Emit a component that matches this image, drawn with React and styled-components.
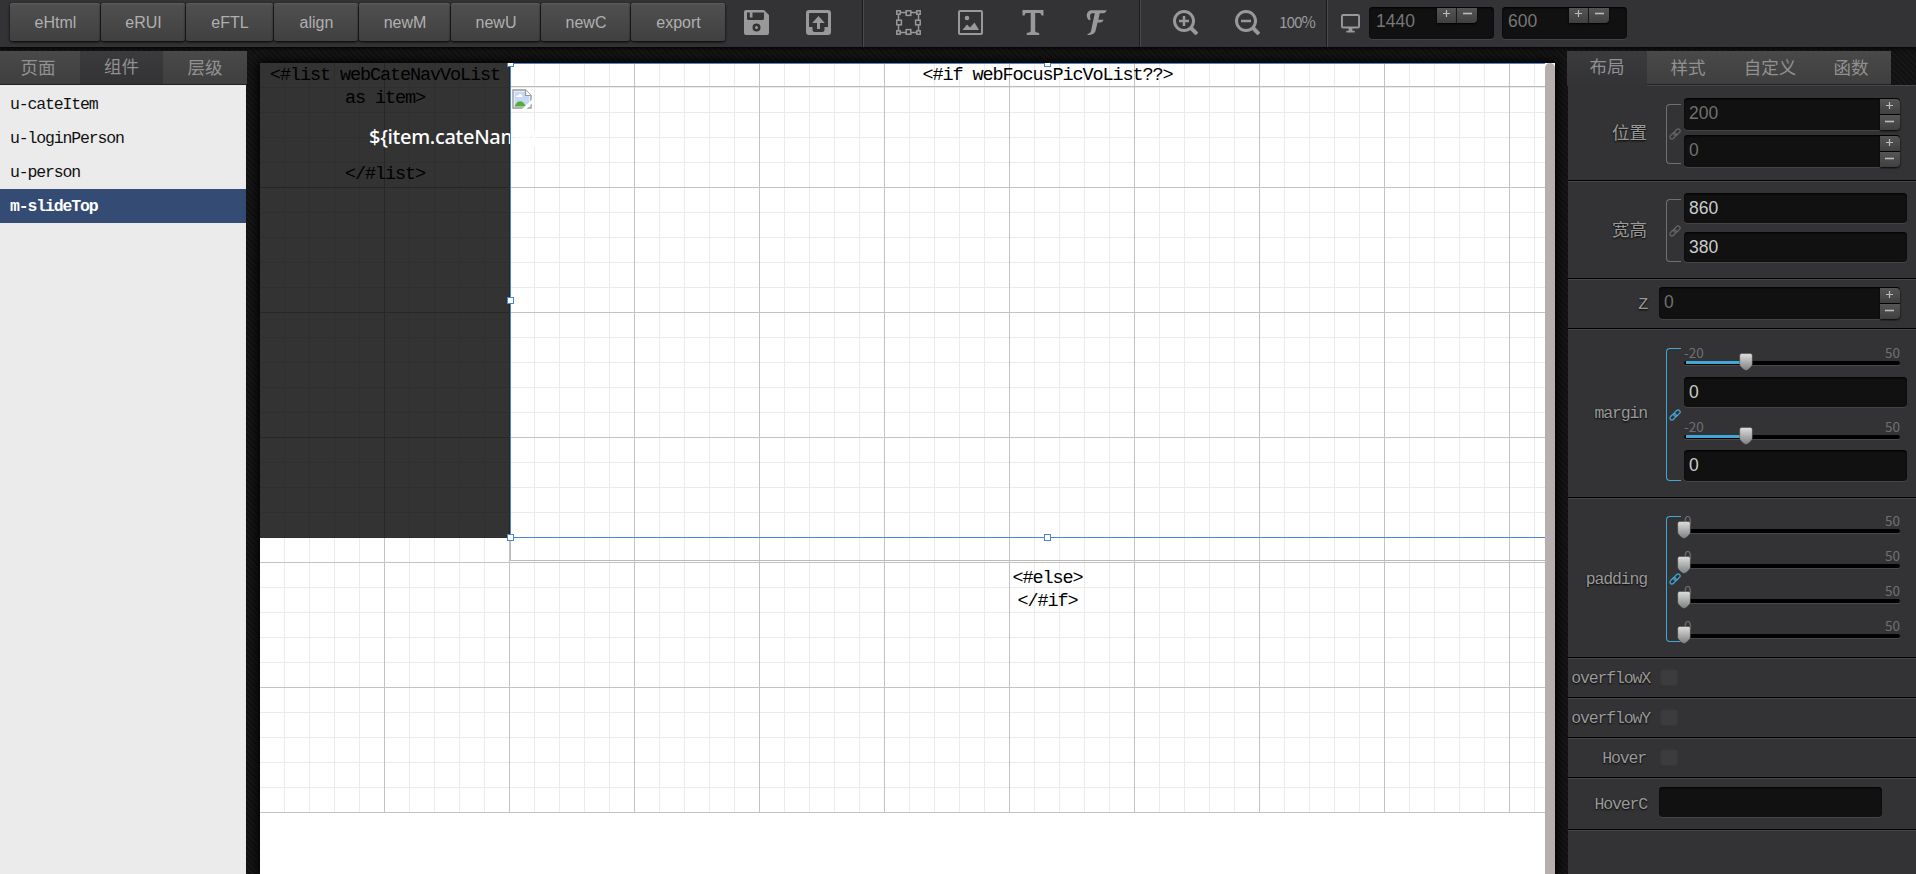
import React from 'react';
import styled, { createGlobalStyle, css } from 'styled-components';

const Global = createGlobalStyle`
  * { box-sizing: border-box; }
  html, body, #root { height: 100%; margin: 0; }
  body { overflow: hidden; background: #141414; font-family: "Liberation Sans", "Noto Sans CJK SC", sans-serif; }
`;

const mono = css`
  font-family: "Liberation Mono", "Noto Sans CJK SC", monospace;
`;
const gothic = css`
  ${mono}
  font-size: 16.5px;
  letter-spacing: -1.15px;
`;

const Page = styled.div`
  display: flex;
  flex-direction: column;
  height: 874px;
  width: 1916px;
  overflow: hidden;
  background: repeating-linear-gradient(45deg, #111 0 2px, #171717 2px 4px);
`;

const Toolbar = styled.header`
  display: flex;
  flex: none;
  height: 47px;
  background: #333335;
  box-shadow: 0 1px 4px #000;
`;
const Buttons = styled.div`
  display: flex;
  gap: 1px;
  padding: 3px 0 6px 10px;
  width: 725px;
`;
const ToolButton = styled.button`
  width: ${p => p.$w}px;
  height: 38px;
  padding: 2px 0 0 1px;
  border: 0;
  border-radius: 3px;
  background: linear-gradient(#505050, #404040);
  box-shadow: 0 1px 3px #000, inset 0 1px 0 #5c5c5c;
  color: #b0b0b0;
  font: 16px "Liberation Sans", sans-serif;
`;
const Group = styled.div`
  display: flex;
  align-items: center;
  height: 47px;
  width: ${p => p.$w}px;
  padding: 0 0 2px ${p => p.$pl}px;
  gap: ${p => p.$gap || 0}px;
  border-right: ${p => (p.$last ? 0 : '1px solid #1c1c1c')};
  box-shadow: ${p => (p.$last ? 'none' : '1px 0 0 #4a4a4a')};
`;
const ToolIcon = styled.svg`
  flex: none;
  width: 25px;
  height: 25px;
  fill: #999;
`;
const OutlineIcon = styled(ToolIcon)`
  fill: none;
  stroke: #999;
`;
const SmallIcon = styled(ToolIcon)`
  width: 19px;
  height: 19px;
  margin: 2px 9px 0 -1px;
`;
const Percent = styled.span`
  margin: 0 0 4px -18px;
  color: #999;
  font: 15.5px/20px "Noto Sans CJK SC", sans-serif;
  letter-spacing: -1.1px;
`;
const field = css`
  background: #111;
  border-radius: 4px;
  box-shadow: inset 0 1px 2px #000, 0 1px 0 #454545;
`;
const SizeField = styled.div`
  ${field}
  display: flex;
  width: 125px;
  height: 32px;
  margin-top: 1px;
  padding: 1px 0 0 7px;
  color: #777;
  font-size: 17.5px;
  line-height: 27px;
  & + & { margin-left: 8px; padding-left: 6px; }
`;
const SizeValue = styled.span`width: 61px;`;
const spin = css`
  display: flex;
  justify-content: center;
  align-items: center;
  background: linear-gradient(#555, #404040);
  svg { width: 9px; height: 9px; stroke: #bbb; stroke-width: 1.2; fill: none; }
`;
const FlatSpin = styled.div`
  ${spin}
  width: 20px;
  height: 15px;
  padding-bottom: 4px;
  border-right: ${p => (p.$line ? '1px solid #222' : 0)};
  border-bottom-right-radius: ${p => (p.$line ? 0 : 4)}px;
  box-shadow: 0 1px 2px #000;
`;

const Body = styled.main`
  display: flex;
  flex: 1;
  min-height: 0;
`;
const Side = styled.aside`
  width: 247px;
  padding-top: 4px;
  display: flex;
  flex-direction: column;
`;
const Tabs = styled.nav`
  display: flex;
  flex: none;
  height: 34px;
  color: #919191;
  font: 17.5px "Noto Sans CJK SC", sans-serif;
`;
const Tab = styled.div`
  width: ${p => p.$w}px;
  height: ${p => (p.$open ? 35 : 34)}px;
  padding-right: ${p => p.$pr || 0}px;
  line-height: ${p => (p.$active ? 30 : 31)}px;
  text-align: center;
  background: ${p => (p.$active ? 'linear-gradient(#3b3b3d, #333335)' : 'linear-gradient(#494949, #3f3f3f)')};
  border-bottom: ${p => (p.$open ? 0 : '1px solid #222')};
`;
const List = styled.div`
  flex: 1;
  width: 246px;
  padding-top: 2px;
  background: #ebebeb;
`;
const Item = styled.div`
  ${gothic}
  height: 34px;
  padding-left: 10px;
  line-height: 36px;
  background: ${p => (p.$on ? '#344b73' : 'none')};
  color: ${p => (p.$on ? '#fff' : '#111')};
  font-weight: ${p => (p.$on ? 700 : 400)};
`;

const Stage = styled.section`
  display: flex;
  width: 1295px;
  margin: 16px 12px 0 13px;
  box-shadow: 0 0 10px 2px #000;
`;
const Board = styled.div`
  position: relative;
  width: 1285px;
  overflow: hidden;
  background: #fff;
`;
const Grid = styled.div`
  display: flex;
  align-items: flex-start;
  height: 750px;
  background:
    linear-gradient(90deg, transparent 124px, #c3c3c3 124px) 0 0 / 125px 125px,
    linear-gradient(transparent 124px, #c3c3c3 124px) 0 0 / 125px 125px,
    linear-gradient(90deg, transparent 24px, #ebebeb 24px) 0 0 / 25px 25px,
    linear-gradient(transparent 24px, #ebebeb 24px) 0 0 / 25px 25px;
`;
const code = css`
  ${mono}
  padding-top: 1px;
  font-size: 18.5px;
  letter-spacing: -1.1px;
  line-height: 23px;
  text-align: center;
  color: #000;
`;
const CateBlock = styled.div`
  ${code}
  flex: none;
  width: 250px;
  height: 475px;
  background: rgba(0, 0, 0, 0.8);
`;
const CateName = styled.div`
  height: 53px;
  padding: 2px 0 0 109px;
  text-align: left;
  white-space: nowrap;
  font: 500 20px/50px "Noto Sans", sans-serif;
  letter-spacing: -0.3px;
  color: #fff;
`;
const Focus = styled.div`
  ${code}
  flex: none;
  width: 1075px;
`;
const Picture = styled.div`
  height: 475px;
  margin: -1px 0 6px;
  padding: 2px 0 0 1px;
  border: 1px solid #bbb;
  text-align: left;
  line-height: 0;
`;
const Selection = styled.div`
  position: absolute;
  left: 250px;
  top: 0;
  width: 1075px;
  height: 475px;
  border: 1px solid #4a86cf;
`;
const Handle = styled.i`
  position: absolute;
  left: ${p => p.$x};
  top: ${p => p.$y};
  width: 7px;
  height: 7px;
  margin: -4px 0 0 -4px;
  background: #fff;
  border: 1px solid #4a86cf;
`;
const Scroll = styled.div`
  width: 10px;
  background: #fff;
  &::before { content: ''; display: block; height: 100%; background: #b7aeae; border-radius: 5px 5px 0 0; }
`;

const Panel = styled.aside`
  width: 349px;
  padding-top: 4px;
`;
const Props = styled.div`
  margin-left: 1px;
  height: 789px;
  background: #333335;
  border-top: 1px solid #474747;
`;
const Row = styled.div`
  display: flex;
  height: ${p => p.$h}px;
  border-bottom: 1px solid #000;
  box-shadow: 0 1px 0 #464646;
`;
const Label = styled.label`
  ${gothic}
  width: ${p => p.$w || 79}px;
  flex: none;
  margin-right: ${p => p.$mr ?? 12}px;
  padding-top: ${p => p.$top}px;
  line-height: 20px;
  text-align: right;
  white-space: nowrap;
  color: #999;
  text-shadow: 0 1px 2px #000;
`;
const Cjk = styled.span`
  font: 17.5px/20px "Noto Sans CJK SC", sans-serif;
  letter-spacing: 0;
`;
const Bracket = styled.div`
  display: flex;
  align-items: center;
  width: 15px;
  height: ${p => p.$h}px;
  margin: ${p => p.$top}px 3px 0 19px;
  flex: none;
  border: 1px solid ${p => (p.$on ? '#42a7d6' : '#707070')};
  border-right: 0;
  border-radius: 4px 0 0 4px;
  svg { flex: none; margin-left: 2px; width: 12px; height: 12px; fill: none; stroke: ${p => (p.$on ? '#42a7d6' : '#666')}; stroke-width: 1.2; }
`;
const Fields = styled.div`
  padding-top: ${p => p.$top}px;
  display: flex;
  flex-direction: column;
  gap: ${p => p.$gap || 0}px;
`;
const Field = styled.div`
  ${field}
  display: flex;
  justify-content: space-between;
  width: ${p => p.$w || 223}px;
  height: ${p => p.$h || 30}px;
  margin-bottom: ${p => p.$mb || 0}px;
  padding-left: 5px;
  color: ${p => (p.$dim ? '#707070' : '#ccc')};
  font-size: 17.5px;
  line-height: 30px;
`;
const Spinner = styled.div`
  display: flex;
  flex-direction: column;
  gap: 1px;
  padding-top: 1px;
  width: 20px;
`;
const Step = styled.div`
  ${spin}
  height: 15px;
  border-radius: ${p => (p.$up ? '0 4px 0 0' : '0 0 4px 0')};
  padding: 0 1px ${p => (p.$up ? 2 : 3)}px 0;
  box-shadow: 0 1px 2px #000;
`;
const SliderBox = styled.div`
  width: 216px;
  height: ${p => p.$h}px;
`;
const Scale = styled.div`
  display: flex;
  justify-content: space-between;
  height: 15px;
  font: 13.5px/12px "Noto Sans CJK SC", sans-serif;
  color: #707070;
`;
const Track = styled.div`
  position: relative;
  height: 4px;
  border-radius: 2px;
  background: #000;
  box-shadow: 0 1px 0 #4a4a4a;
`;
const Fill = styled.div`
  height: 3px;
  margin-left: 2px;
  background: #42a7d6;
`;
const Knob = styled.svg`
  position: absolute;
  top: -8px;
  width: 14px;
  height: 18px;
  margin-left: -7px;
`;
const Check = styled.div`
  width: 20px;
  height: 19px;
  margin-top: 10px;
  border-radius: 4px;
  background: #3c3c3e;
  box-shadow: inset 0 0 3px #222;
`;

const Plus = () => <svg viewBox="0 0 9 9"><path d="M1 4.5h7M4.5 1v7" /></svg>;
const Minus = () => <svg viewBox="0 0 9 9"><path d="M0 4.5h9" strokeWidth="1.6" /></svg>;
const LinkIcon = () => (
  <svg viewBox="0 0 12 12">
    <g transform="rotate(-45 6 6)">
      <rect x="-0.4" y="4" width="7.4" height="4" rx="2" />
      <rect x="5" y="4" width="7.4" height="4" rx="2" />
    </g>
  </svg>
);

const SaveIcon = () => (
  <ToolIcon viewBox="0 0 25 25">
    <path fillRule="evenodd" d="M2 0h18l5 5v18a2 2 0 0 1-2 2H2a2 2 0 0 1-2-2V2a2 2 0 0 1 2-2zM3 2.500v6a1.500 1.500 0 0 0 1.500 1.500h14a1.500 1.500 0 0 0 1.500-1.500v-6H8.500v5H5.800v-5zM12.500 13.500a4 4 0 1 0 0 8 4 4 0 0 0 0-8zm0 2.500a1.500 1.500 0 1 1 0 3 1.500 1.500 0 0 1 0-3z" />
  </ToolIcon>
);
const UploadIcon = () => (
  <ToolIcon viewBox="0 0 25 25">
    <path fillRule="evenodd" d="M3 0h19a3 3 0 0 1 3 3v19a3 3 0 0 1-3 3H3a3 3 0 0 1-3-3V3a3 3 0 0 1 3-3zM4 3a1 1 0 0 0-1 1v13h3.500v3a2 2 0 0 0 2 2h8a2 2 0 0 0 2-2v-3H22V4a1 1 0 0 0-1-1zM12.500 6l6.300 7H14v6h-3v-6H6.200z" />
  </ToolIcon>
);
const FrameIcon = () => (
  <OutlineIcon viewBox="0 0 25 25" strokeWidth="1.5">
    <path d="M4.500 2.500H10M15 2.500h5.500M4.500 22.500H10M15 22.500h5.500M2.500 4.500V10M2.500 15v5.500M22.500 4.500V10M22.500 15v5.500" />
    {[[1, 1], [21, 1], [1, 21], [21, 21]].map(([x, y]) => <rect key={`${x}-${y}`} x={x - 0.2} y={y - 0.2} width="3.400" height="3.400" />)}
    {[[10.2, 0.8], [10.2, 19.6], [0.8, 10.2], [19.6, 10.2]].map(([x, y]) => <rect key={`${x}-${y}`} x={x} y={y} width="4.600" height="4.600" />)}
  </OutlineIcon>
);
const ImageIcon = () => (
  <ToolIcon viewBox="0 0 25 25">
    <path fillRule="evenodd" d="M2 0h21a2 2 0 0 1 2 2v21a2 2 0 0 1-2 2H2a2 2 0 0 1-2-2V2a2 2 0 0 1 2-2zM2 2v21h21V2z" />
    <circle cx="9" cy="8" r="2.300" />
    <path d="M4.500 20l4.500-5.500 3 3 4.500-5 4.500 7.500z" />
  </ToolIcon>
);
const TextIcon = () => (
  <ToolIcon viewBox="0 0 25 25">
    <path d="M2.500 0h21v5.500h-2C21 3.500 20.500 3 18.500 3h-3.300v17.500c0 1.500.8 2 4 2.500v2h-12.500v-2c3.200-.5 4-1 4-2.500V3H7.500C5.500 3 5 3.500 4.500 5.500h-2z" />
  </ToolIcon>
);
const FontIcon = () => (
  <ToolIcon viewBox="0 0 25 25">
    <path d="M8.500 .3h16c-.6 2.300-1.500 3-3.700 3h-3L16.300 9.800H21.500c-.6 1.900-1.400 2.600-3.200 2.600h-2.700L13.500 21c-1 2.900-3.500 4-8 4v-1c2-.4 2.900-1.200 3.500-3L12.800 3.300h-2.500C8 3.600 7.500 6.300 8.700 9.500L7 10.300C3.500 7 4 2 8.500 .3z" />
  </ToolIcon>
);
const ZoomIcon = ({ plus }) => (
  <OutlineIcon viewBox="0 0 25 25" strokeWidth="3">
    <circle cx="11" cy="11" r="9.500" />
    <path d="M17.500 17.500l6.500 6.500" strokeWidth="4" />
    <path d={plus ? 'M6 11h10M11 6v10' : 'M6 11h10'} strokeWidth="2.500" />
  </OutlineIcon>
);
const MonitorIcon = () => (
  <SmallIcon viewBox="0 0 25 25">
    <path fillRule="evenodd" d="M3 0h19a3 3 0 0 1 3 3v13a3 3 0 0 1-3 3H3a3 3 0 0 1-3-3V3a3 3 0 0 1 3-3zM2.500 2.500v14h20v-14zM10 19h5v3h3v2.500H7V22h3z" />
  </SmallIcon>
);
const BrokenImage = () => (
  <svg width="20" height="20" viewBox="0 0 20 20">
    <path d="M1 1h12.500l5.500 5.500V19H1z" fill="#fff" stroke="#999" strokeWidth="1.4" />
    <path d="M2.500 2.500H13V7h4.500v10.500h-15z" fill="#c5d8f5" />
    <path d="M4 8c0-2 2-2 2-1 1-3 4-2 4 0 1 0 1 1 0 1z" fill="#fff" />
    <path d="M2.500 17.500c2.500-6.500 8-7.500 11.500 0z" fill="#58ab35" />
    <path d="M10 20L20 10.500v4L14.500 20z" fill="#fff" />
    <path d="M13.500 1v5.500H19" fill="#fff" stroke="#999" strokeWidth="1.2" />
  </svg>
);

const Slider = ({ min, at, h }) => (
  <SliderBox $h={h}>
    <Scale><span>{min}</span><span>50</span></Scale>
    <Track>
      {at > 0 && <Fill style={{ width: at - 2 }} />}
      <Knob viewBox="0 0 14 18" style={{ left: at }}>
        <defs>
          <linearGradient id="knob" x2="0" y2="1"><stop stopColor="#dedede" /><stop offset="1" stopColor="#7d8080" /></linearGradient>
        </defs>
        <path d="M2 .5h10l1.300 1.500v9.500c0 1.500-4.300 6-6.300 6s-6.300-4.500-6.300-6V2z" fill="url(#knob)" stroke="#333" strokeWidth=".4" />
      </Knob>
    </Track>
  </SliderBox>
);
const StepField = ({ w, children }) => (
  <Field $w={w} $h={32} $dim>
    {children}
    <Spinner><Step $up><Plus /></Step><Step><Minus /></Step></Spinner>
  </Field>
);
const SizeInput = ({ value }) => (
  <SizeField>
    <SizeValue>{value}</SizeValue>
    <FlatSpin $line><Plus /></FlatSpin>
    <FlatSpin><Minus /></FlatSpin>
  </SizeField>
);

const BUTTONS = [['eHtml', 90], ['eRUI', 84], ['eFTL', 87], ['align', 84], ['newM', 91], ['newU', 89], ['newC', 89], ['export', 94]];
const COMPONENTS = ['u-cateItem', 'u-loginPerson', 'u-person', 'm-slideTop'];

export default function App() {
  return (
    <Page>
      <Global />
      <Toolbar>
        <Buttons>{BUTTONS.map(([t, w]) => <ToolButton key={t} $w={w}>{t}</ToolButton>)}</Buttons>
        <Group $w={138} $pl={19} $gap={37}><SaveIcon /><UploadIcon /></Group>
        <Group $w={277} $pl={33} $gap={37}><FrameIcon /><ImageIcon /><TextIcon /><FontIcon /></Group>
        <Group $w={187} $pl={33} $gap={37}><ZoomIcon plus /><ZoomIcon /><Percent>100%</Percent></Group>
        <Group $w={589} $pl={15} $last>
          <MonitorIcon />
          <SizeInput value="1440" />
          <SizeInput value="600" />
        </Group>
      </Toolbar>
      <Body>
        <Side>
          <Tabs><Tab $w={80} $pr={4}>页面</Tab><Tab $w={83} $active>组件</Tab><Tab $w={84}>层级</Tab></Tabs>
          <List>
            {COMPONENTS.map(t => <Item key={t} $on={t === 'm-slideTop'}>{t}</Item>)}
          </List>
        </Side>
        <Stage>
          <Board>
            <Grid>
              <CateBlock>
                {'<#list webCateNavVoList as item>'}
                <CateName>{'${item.cateName}'}</CateName>
                {'</#list>'}
              </CateBlock>
              <Focus>
                {'<#if webFocusPicVoList??>'}
                <Picture><BrokenImage /></Picture>
                {'<#else>'}<br />{'</#if>'}
              </Focus>
            </Grid>
            <Selection>
              <Handle $x="0" $y="0" /><Handle $x="50%" $y="0" /><Handle $x="0" $y="50%" />
              <Handle $x="0" $y="calc(100% + 1px)" /><Handle $x="50%" $y="calc(100% + 1px)" />
            </Selection>
          </Board>
          <Scroll />
        </Stage>
        <Panel>
          <Tabs><Tab $w={80} $active $open>布局</Tab><Tab $w={82}>样式</Tab><Tab $w={82}>自定义</Tab><Tab $w={80}>函数</Tab></Tabs>
          <Props>
            <Row $h={95}>
              <Label $top={36} $mr={0}><Cjk>位置</Cjk></Label>
              <Bracket $top={18} $h={60}><LinkIcon /></Bracket>
              <Fields $top={12} $gap={5}><StepField w={216}>200</StepField><StepField w={216}>0</StepField></Fields>
            </Row>
            <Row $h={98}>
              <Label $top={38} $mr={0}><Cjk>宽高</Cjk></Label>
              <Bracket $top={18} $h={63}><LinkIcon /></Bracket>
              <Fields $top={12} $gap={9}><Field>860</Field><Field>380</Field></Fields>
            </Row>
            <Row $h={50}>
              <Label $top={16}>Z</Label>
              <Fields $top={8}><StepField w={241}>0</StepField></Fields>
            </Row>
            <Row $h={169}>
              <Label $top={75} $mr={0}>margin</Label>
              <Bracket $on $top={19} $h={133}><LinkIcon /></Bracket>
              <Fields $top={17}>
                <Slider min="-20" at={62} h={31} /><Field $mb={13}>0</Field>
                <Slider min="-20" at={62} h={30} /><Field $h={31}>0</Field>
              </Fields>
            </Row>
            <Row $h={160}>
              <Label $top={72} $mr={0}>padding</Label>
              <Bracket $on $top={18} $h={126}><LinkIcon /></Bracket>
              <Fields $top={16}>{[0, 1, 2, 3].map(i => <Slider key={i} min="0" at={0} h={35} />)}</Fields>
            </Row>
            <Row $h={40}><Label $top={11} $w={82} $mr={9}>overflowX</Label><Check /></Row>
            <Row $h={40}><Label $top={11} $w={82} $mr={9}>overflowY</Label><Check /></Row>
            <Row $h={40}><Label $top={11} $w={78} $mr={13}>Hover</Label><Check /></Row>
            <Row $h={52}><Label $top={17}>HoverC</Label><Fields $top={9}><Field /></Fields></Row>
          </Props>
        </Panel>
      </Body>
    </Page>
  );
}
